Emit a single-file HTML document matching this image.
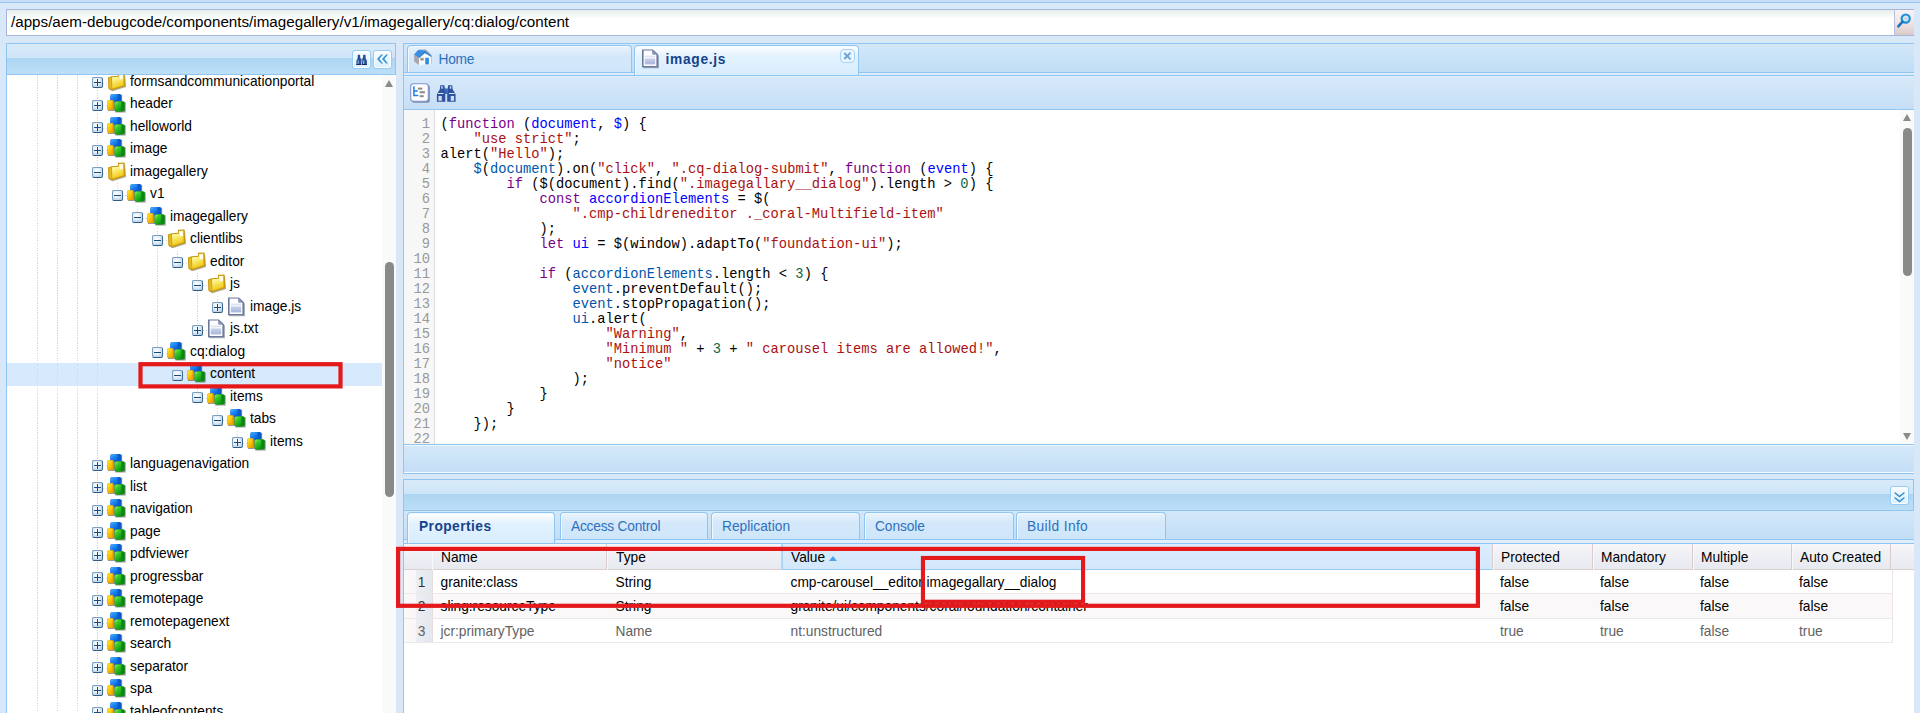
<!DOCTYPE html><html><head><meta charset="utf-8"><style>*{box-sizing:border-box;margin:0;padding:0}
html,body{width:1920px;height:713px;overflow:hidden}
body{background:#d9e8f8;font-family:"Liberation Sans",sans-serif;position:relative}
#topline,#addr,#srch,#lp,#rp,#pp{position:absolute}
#lph,#lph *,#tree,#tree *,#tsb,#tsb *,#rp *,#pp *{position:absolute}
.ic{position:absolute;overflow:visible}
#topline{left:0;top:0;width:1920px;height:3px;background:#c9def4;border-bottom:1px solid #93c6f0}
#addr{left:6px;top:9px;width:1888px;height:27px;border:1px solid #a9b5d6;border-right:0;background:linear-gradient(#e6efee,#fff 9px);font-size:15.2px;color:#000;padding:3px 0 0 4px;white-space:nowrap}
#srch{left:1894px;top:9px;width:20px;height:27px;border:1px solid #a9b5d6;border-left:1px solid #b8c0dc;border-right:0;background:linear-gradient(#f8f3f3,#f1e7e7 45%,#dccaca)}
#lp{left:6px;top:43px;width:390px;height:700px;background:#fff;border:1px solid #8ec5f2;border-right:0}
#lph{left:0;top:0;width:389px;border-right:1px solid #8ec5f2;height:31px;background:linear-gradient(#d9ebfa 0,#cee5f8 45%,#acd5f3 47%,#bcdff7 100%);border-bottom:1px solid #8ec5f2}
.tbtn{width:19px;height:19px;border:1px solid #95cdf4;border-radius:3px;background:linear-gradient(#fbfdff,#e9f5fe 50%,#dcf0fd);box-shadow:inset 0 0 0 1px #fff}
#tree{left:0;top:31px;width:375px;height:670px;overflow:hidden}
.sel{left:0;width:375px;height:22.7px;background:#d7e9fc}
.vl{width:1px;background:repeating-linear-gradient(#e6d0d5 0 1.25px,transparent 1.25px 2.5px)}
.hl{height:1px;background:repeating-linear-gradient(90deg,#e6d0d5 0 1.25px,transparent 1.25px 2.5px)}
.exp{width:11px;height:11px;border:1px solid #7b9dbd;border-right-color:#3d6a8f;border-bottom-color:#2f5b80;border-radius:2px;background:radial-gradient(circle at 40% 35%,#fff 0,#e6f0fa 40%,#a3c3e6 100%)}
.exp:before{content:"";position:absolute;left:1.4px;top:3.6px;width:6.4px;height:1.4px;background:#1d4a72}
.exp.plus:after{content:"";position:absolute;left:3.9px;top:1.2px;width:1.4px;height:6.4px;background:#1d4a72}
.tt{font-size:13.75px;line-height:22.5px;white-space:nowrap;color:#000;top:0}
#tsb{left:375px;top:31px;width:14px;height:670px;background:#fafafa}
.uparr{width:0;height:0;border-left:4.75px solid transparent;border-right:4.75px solid transparent;border-bottom:7px solid #8a8a8a}
.dnarr{width:0;height:0;border-left:4.75px solid transparent;border-right:4.75px solid transparent;border-top:7px solid #8a8a8a}
.thumb{width:9px;background:#8a8a8a;border-radius:4.5px}
#rp{left:403px;top:43px;width:1511px;height:431px;background:#fff;border:1px solid #8ec5f2;border-right:0}
#rtabs{left:0;top:0;width:1510px;height:32px;background:linear-gradient(#d3e8f9,#bedcf5);border-bottom:1px solid #8ec5f2}
#rtabs:before{content:"";position:absolute;left:0;top:28px;width:1510px;height:1px;background:#8ec5f2}#rtabs:after{content:"";position:absolute;left:0;top:29px;width:1510px;height:2px;background:#deecfb}
.tab{top:1px;height:27px;border:1px solid #8ec5f2;border-bottom:0;border-radius:4px 4px 0 0;background:linear-gradient(#e9f3fc,#d3e8fa 40%,#cfe6fa);box-shadow:inset 1px 1px 0 #f1f8fe;z-index:1}
.tab.act{background:linear-gradient(#ffffff,#e3f2fe 35%,#d8edfe);height:30px;z-index:2}#ptabs .tab.act{height:31px}
.tlbl{top:6px;font-size:13.75px;color:#2e70bd;white-space:nowrap;letter-spacing:-0.3px}
.tlbl.b{font-weight:bold;color:#15428b;letter-spacing:0.45px}
.tclose{left:205px;top:3px;width:15px;height:14px;border:1px solid #a9d3f5;border-radius:4px;background:#eaf5fe}
.tclose:before,.tclose:after{content:"";position:absolute;left:2.3px;top:5px;width:8.5px;height:2px;background:#6ba5dc;transform:rotate(45deg)}
.tclose:after{transform:rotate(-45deg)}
#rtb{left:0;top:32px;width:1510px;height:34px;background:linear-gradient(#d6e9f9,#c6dff6);border-bottom:1px solid #8ec5f2;box-shadow:inset 0 1px 0 #e3f0fc}
#code{left:0;top:66px;width:1510px;height:334px;background:#fff;overflow:hidden}
#gut{left:0;top:0;width:31px;height:334px;background:#f7f7f7;border-right:1px solid #ddd}
.ln{right:4px;font-family:"Liberation Mono",monospace;font-size:13.75px;line-height:15px;color:#999}
#src{left:36.5px;top:0;width:1450px;height:334px}
.cl{left:0;font-family:"Liberation Mono",monospace;font-size:13.75px;line-height:15px;white-space:pre;color:#000}
.cl i{position:static!important;font-style:normal}
.k{color:#708}.d{color:#00f}.v{color:#05a}.s{color:#a11}.n{color:#164}
#csb{left:1496px;top:0;width:14px;height:334px;background:#fafafa}
#rstat{left:0;top:400px;width:1510px;height:29px;background:linear-gradient(#d4e8f9,#c4def6);border-top:1px solid #8ec5f2;box-shadow:inset 0 1px 0 #eef7fe,inset 0 -1px 0 #f4faff}
#pp{left:403px;top:479px;width:1511px;height:240px;background:#fff;border:1px solid #8ec5f2;border-right:0}
#pph{left:0;top:0;width:1510px;height:31px;border-right:1px solid #8ec5f2;background:linear-gradient(#d9ebfa 0,#cee5f8 45%,#acd5f3 47%,#bcdff7 100%);border-bottom:1px solid #8ec5f2}
#ptabs{left:0;top:31px;width:1510px;height:33px;background:linear-gradient(#d3e8f9,#bedcf5);border-bottom:1px solid #8ec5f2}
#ptabs:before{content:"";position:absolute;left:0;top:28px;width:1510px;height:1px;background:#8ec5f2}#ptabs:after{content:"";position:absolute;left:0;top:29px;width:1510px;height:3px;background:#e0eefc}
#ghd{left:0;top:64px;width:1510px;height:26px;background:linear-gradient(#f7f6f8,#e6e9f0);border-bottom:1px solid #dccfcf}
.gh{top:0;height:26px;font-size:13.75px;line-height:27.5px;padding-left:8px;color:#000;border-right:1px solid #d8cccc;border-left:1px solid #f8f8fa;white-space:nowrap}
.gh.num{border-left:0}
.gh.sorted{background:linear-gradient(#dcedfd,#d3e8fc);border-bottom:1px solid #99ccf3;border-left:1px solid #a6d5f6;height:26px}
.sarr{position:static!important;display:inline-block;margin-left:4px;vertical-align:1.5px;width:0;height:0;border-left:4.5px solid transparent;border-right:4.5px solid transparent;border-bottom:5px solid #4da1e3}
.grow{left:0;width:1489px;height:24px;border-bottom:1px solid #ece8e8;border-right:1px solid #ece4e4;background:#fff}
.grow.alt{background:#faf8f9}
.gc{top:0;height:23px;font-size:13.75px;line-height:25px;padding-left:8.5px;white-space:nowrap;color:#000;overflow:hidden}
.gc.num{color:#333;padding:0 6.5px 0 0;text-align:right;background:linear-gradient(90deg,#fbf8f9 0,#f8f6f8 42%,#eceef3 45%,#e3e7ee 100%);border-right:1px solid #e6dcdc;height:100%}
.grow.prot .gc{color:#626262}
#ann{position:absolute;left:0;top:0;z-index:50}
</style></head><body><svg width="0" height="0" style="position:absolute"><defs>
<linearGradient id="gy" x1="0" y1="0" x2="0.3" y2="1"><stop offset="0" stop-color="#fffde0"/><stop offset=".45" stop-color="#fbef7a"/><stop offset="1" stop-color="#f2c812"/></linearGradient>
<linearGradient id="gb" x1="0" y1="0" x2="0.6" y2="1"><stop offset="0" stop-color="#4fb0ff"/><stop offset=".5" stop-color="#1d86f2"/><stop offset="1" stop-color="#0c5fd6"/></linearGradient>
<linearGradient id="gyc" x1="0" y1="0" x2="0.5" y2="1"><stop offset="0" stop-color="#ffe640"/><stop offset=".6" stop-color="#fbc800"/><stop offset="1" stop-color="#f0a800"/></linearGradient>
<linearGradient id="ggc" x1="0" y1="0" x2="0.6" y2="1"><stop offset="0" stop-color="#90f86a"/><stop offset=".4" stop-color="#3ccc28"/><stop offset="1" stop-color="#0d9a14"/></linearGradient>
<linearGradient id="gfb" x1="0" y1="0" x2="0" y2="1"><stop offset="0" stop-color="#c9d2ea"/><stop offset="1" stop-color="#a8b6dc"/></linearGradient>
<filter id="sh" x="-20%" y="-20%" width="150%" height="150%"><feGaussianBlur stdDeviation=".7"/></filter>
<g id="folder"><path d="M2 7 L5 5.5 L11.5 5 L11.5 2 L18 1.8 L19 15 L5.5 19.2 L2.3 17.5 Z" fill="#554010" opacity=".45" filter="url(#sh)"/><path d="M1 5.6 L4.5 4.2 L11 3.8 L11 0.8 L17.5 0.5 L18.3 14 L4.5 18.3 L1.3 16.5 Z" fill="#c99a0e"/><path d="M5 5.3 L11.8 4.7 L12 2 L16.3 1.8 L16.6 13.3 L5.3 16.8 Z" fill="url(#gy)"/><path d="M2.1 6.2 L4.3 5.3 L4.5 17 L2.4 15.9 Z" fill="#e9bb22"/><path d="M12.8 2.4 L15.8 2.3 L15.9 7 L12.9 7.2 Z" fill="#fffef4"/></g>
<g id="comp"><path d="M4.5 0.8 L15.2 0.8 L15.2 8 L18.7 8.2 L18.7 18.5 L8.5 18.5 L7.7 17 L1 17 L1 7.5 L4.2 7.2 Z" fill="#222" opacity=".45" filter="url(#sh)"/><path d="M5.3 -0.1 L12.4 -0.1 Q14.4 -0.1 14.4 1.9 L14.4 6.4 Q14.4 8.4 12.4 8.4 L5.3 8.4 Q3.3 8.4 3.3 6.4 L3.3 1.9 Q3.3 -0.1 5.3 -0.1 Z" fill="#0b5acc"/><path d="M5.3 0.1 L10.6 0.1 L10.6 8.2 L5.3 8.2 Q3.5 8.2 3.5 6.3999999999999995 L3.5 1.9000000000000001 Q3.5 0.1 5.3 0.1 Z" fill="url(#gb)"/><path d="M1.8 6.2 L5.5 6.2 Q7.3 6.2 7.3 8.0 L7.3 14.3 Q7.3 16.1 5.5 16.1 L1.8 16.1 Q0 16.1 0 14.3 L0 8.0 Q0 6.2 1.8 6.2 Z" fill="#e08c00"/><path d="M1.8 6.4 L5.6 6.4 L5.6 15.9 L1.8 15.9 Q0.2 15.9 0.2 14.3 L0.2 8.0 Q0.2 6.4 1.8 6.4 Z" fill="url(#gyc)"/><path d="M9.6 7.2 L15.8 7.2 Q17.8 7.2 17.8 9.2 L17.8 15.600000000000001 Q17.8 17.6 15.8 17.6 L9.6 17.6 Q7.6 17.6 7.6 15.600000000000001 L7.6 9.2 Q7.6 7.2 9.6 7.2 Z" fill="#0a8612"/><path d="M9.6 7.4 L14.4 7.4 L14.4 17.4 L9.6 17.4 Q7.8 17.4 7.8 15.599999999999998 L7.8 9.200000000000001 Q7.8 7.4 9.6 7.4 Z" fill="url(#ggc)"/></g>
<g id="file"><path d="M2 1.5 L13 1.5 L18 6.5 L18 19.3 L2 19.3 Z" fill="#303a58" opacity=".4" filter="url(#sh)"/><path d="M1 0.4 L11.8 0.4 L16.9 5.3 L16.9 18.3 L1 18.3 Z" fill="#6a789c"/><path d="M2.6 1.6 L11.3 1.6 L11.5 5.4 L15.4 5.6 L15.4 16.9 L2.6 16.9 Z" fill="#fdfdff"/><path d="M11.6 1.6 L15.4 5.3 L11.6 5.3 Z" fill="#8d9abb"/><rect x="3.8" y="6.6" width="10.4" height="1.8" fill="#dfe3f1"/><rect x="3.8" y="9.4" width="10.4" height="6" fill="url(#gfb)"/></g>
<g id="home"><path d="M3.5 8 L8 3.5 L15 3.5 L21 9.5 L21 18 L9 18.5 L3.5 15 Z" fill="#303030" opacity=".35" filter="url(#sh)"/><path d="M3.1 8.4 L7.1 4.1 L13.6 4.4 L8 12.1 Z" fill="#3b8fe2"/><path d="M3.1 8.4 L8 12.1 L8 18.9 L3.1 15.5 Z" fill="#a9a9ad"/><path d="M8 12.1 L13.9 6.9 L20.4 10 L20.4 18.3 L8 18.9 Z" fill="#fbfbfb"/><path d="M13.6 4.4 L20.4 10 L20.2 11 L13.9 6.9 L8 12.1 L7.9 11.4 Z" fill="#2d7dd6"/><rect x="14.2" y="11.8" width="3.7" height="6.5" fill="#2f8ce8"/><rect x="9.3" y="11.8" width="3.4" height="2.8" fill="#9a9a9a"/></g>
<g id="struct"><rect x="1.8" y="1.8" width="18" height="18" rx="2.5" fill="#3b4560" opacity=".55" filter="url(#sh)"/><rect x="0.7" y="0.7" width="17.6" height="17.6" rx="2.8" fill="#fff" stroke="#7e92d0" stroke-width="1.1"/><path d="M3.9 3.2 V12.5 H8.3 M3.9 8 H7.8" stroke="#1a80e6" stroke-width="1.5" fill="none"/><rect x="7.8" y="4.6" width="4.6" height="2" fill="#8c8c8c"/><rect x="9.7" y="8.2" width="5.2" height="2.1" fill="#8c8c8c"/><rect x="9.7" y="12.2" width="4" height="2" fill="#8c8c8c"/></g>
<g id="binoc"><path d="M4.3 1.3 H8.3 L9 5.5 L9.3 8 V17.7 H0.9 V10.5 L2.5 7.5 L3.8 5.5 Z M16.2 1.3 H12.2 L11.5 5.5 L11.2 8 V17.7 H19.6 V10.5 L18 7.5 L16.7 5.5 Z" fill="#2c52a0"/><rect x="8.8" y="4.5" width="3" height="5.5" fill="#3e66b6"/><path d="M2.4 12 H5.8 V16.8 H2.4 Z M14.7 12 H18.1 V16.8 H14.7 Z" fill="#d3ddf2"/><rect x="5.2" y="2.2" width="1.5" height="2.5" fill="#c8d4f0"/><rect x="13.8" y="2.2" width="1.5" height="2.5" fill="#c8d4f0"/><path d="M2.3 9 H7.5 V10 H1.8 Z M13 9 H18.2 L18.7 10 H13 Z" fill="#dfe7f7"/></g>
<g id="binsm"><path d="M0.4 11 L0.4 6.8 L1.6 4.5 L1.8 0.8 L4 0.8 L4.4 4.5 L5.3 4.5 L5.3 11 Z" fill="#2a4d94"/><path d="M6 11 L6 4.5 L6.9 4.5 L7.3 0.8 L9.5 0.8 L9.7 4.5 L10.9 6.8 L10.9 11 Z" fill="#2a4d94"/><rect x="4.8" y="5" width="1.7" height="2.5" fill="#6e8fcf"/><path d="M1.7 6.5 L2.7 6.5 L2.4 10.2 L1.7 10.2 Z" fill="#a9cdf5"/><path d="M7.2 6.5 L8.4 6.5 L8.1 10.2 L7.2 10.2 Z" fill="#a9cdf5"/><rect x="0.4" y="10" width="4.9" height="1" fill="#132a5c"/><rect x="6" y="10" width="4.9" height="1" fill="#132a5c"/></g>
<g id="dblleft"><path d="M5.2 0.5 L1 5 L5.2 9.5 L7 9.5 L3.4 5 L7 0.5 Z M10.2 0.5 L6 5 L10.2 9.5 L12 9.5 L8.4 5 L12 0.5 Z" fill="#3396d3"/></g>
<g id="dbldown"><path d="M0.6 0.8 L5.5 4.6 L10.4 0.8 L10.4 2.6 L5.5 6.6 L0.6 2.6 Z M0.6 5.8 L5.5 9.6 L10.4 5.8 L10.4 7.6 L5.5 11.6 L0.6 7.6 Z" fill="#3590cc"/></g>
<g id="mag"><circle cx="9.7" cy="5.6" r="4.1" stroke="#1f8fdc" stroke-width="2.2" fill="#dae6ee"/><circle cx="9.7" cy="5.6" r="1.6" fill="#c4d8e6"/><path d="M6.6 8.7 L2.3 13.4" stroke="#1a72c4" stroke-width="2.6" stroke-linecap="round"/></g>
</defs></svg>
<div id="topline"></div><div id="addr">/apps/aem-debugcode/components/imagegallery/v1/imagegallery/cq:dialog/content</div><div id="srch"><svg style="position:absolute;left:1px;top:3px;width:18px;height:18px" viewBox="0 0 18 18"><use href="#mag"/></svg></div><div id="lp"><div id="lph"><div class="tbtn" style="left:345px;top:6px"><svg style="position:absolute;left:3px;top:3px;width:12px;height:12px" viewBox="0 0 12 12"><use href="#binsm"/></svg></div><div class="tbtn" style="left:366px;top:6px"><svg style="position:absolute;left:2px;top:3px;width:14px;height:12px" viewBox="0 0 14 12"><use href="#dblleft"/></svg></div></div><div id="tree"><div class="sel" style="top:288.30px"></div><div class="vl" style="left:30px;top:0.00px;height:638.00px"></div><div class="vl" style="left:50px;top:0.00px;height:638.00px"></div><div class="vl" style="left:70px;top:0.00px;height:638.00px"></div><div class="vl" style="left:90px;top:0.00px;height:638.00px"></div><div class="vl" style="left:110px;top:108.30px;height:11.80px"></div><div class="vl" style="left:130px;top:130.80px;height:11.80px"></div><div class="vl" style="left:150px;top:153.30px;height:124.30px"></div><div class="vl" style="left:170px;top:175.80px;height:11.80px"></div><div class="vl" style="left:190px;top:198.30px;height:56.80px"></div><div class="vl" style="left:210px;top:220.80px;height:11.80px"></div><div class="vl" style="left:170px;top:288.30px;height:11.80px"></div><div class="vl" style="left:190px;top:310.80px;height:11.80px"></div><div class="vl" style="left:210px;top:333.30px;height:11.80px"></div><div class="vl" style="left:230px;top:355.80px;height:11.80px"></div><div class="hl" style="left:96px;top:7.60px;width:4px"></div><div class="exp plus" style="left:85px;top:2px"></div><svg class="ic" style="left:100px;top:-3.4px;width:20px;height:20px" viewBox="0 0 20 20"><use href="#folder"/></svg><div class="tt" style="left:123px;top:-4.20px">formsandcommunicationportal</div><div class="hl" style="left:96px;top:30.10px;width:4px"></div><div class="exp plus" style="left:85px;top:25px"></div><svg class="ic" style="left:100px;top:19.1px;width:20px;height:20px" viewBox="0 0 20 20"><use href="#comp"/></svg><div class="tt" style="left:123px;top:18.30px">header</div><div class="hl" style="left:96px;top:52.60px;width:4px"></div><div class="exp plus" style="left:85px;top:47px"></div><svg class="ic" style="left:100px;top:41.6px;width:20px;height:20px" viewBox="0 0 20 20"><use href="#comp"/></svg><div class="tt" style="left:123px;top:40.80px">helloworld</div><div class="hl" style="left:96px;top:75.10px;width:4px"></div><div class="exp plus" style="left:85px;top:70px"></div><svg class="ic" style="left:100px;top:64.1px;width:20px;height:20px" viewBox="0 0 20 20"><use href="#comp"/></svg><div class="tt" style="left:123px;top:63.30px">image</div><div class="hl" style="left:96px;top:97.60px;width:4px"></div><div class="exp minus" style="left:85px;top:92px"></div><svg class="ic" style="left:100px;top:86.6px;width:20px;height:20px" viewBox="0 0 20 20"><use href="#folder"/></svg><div class="tt" style="left:123px;top:85.80px">imagegallery</div><div class="hl" style="left:116px;top:120.10px;width:4px"></div><div class="exp minus" style="left:105px;top:115px"></div><svg class="ic" style="left:120px;top:109.1px;width:20px;height:20px" viewBox="0 0 20 20"><use href="#comp"/></svg><div class="tt" style="left:143px;top:108.30px">v1</div><div class="hl" style="left:136px;top:142.60px;width:4px"></div><div class="exp minus" style="left:125px;top:137px"></div><svg class="ic" style="left:140px;top:131.6px;width:20px;height:20px" viewBox="0 0 20 20"><use href="#comp"/></svg><div class="tt" style="left:163px;top:130.80px">imagegallery</div><div class="hl" style="left:156px;top:165.10px;width:4px"></div><div class="exp minus" style="left:145px;top:160px"></div><svg class="ic" style="left:160px;top:154.1px;width:20px;height:20px" viewBox="0 0 20 20"><use href="#folder"/></svg><div class="tt" style="left:183px;top:153.30px">clientlibs</div><div class="hl" style="left:176px;top:187.60px;width:4px"></div><div class="exp minus" style="left:165px;top:182px"></div><svg class="ic" style="left:180px;top:176.6px;width:20px;height:20px" viewBox="0 0 20 20"><use href="#folder"/></svg><div class="tt" style="left:203px;top:175.80px">editor</div><div class="hl" style="left:196px;top:210.10px;width:4px"></div><div class="exp minus" style="left:185px;top:205px"></div><svg class="ic" style="left:200px;top:199.1px;width:20px;height:20px" viewBox="0 0 20 20"><use href="#folder"/></svg><div class="tt" style="left:223px;top:198.30px">js</div><div class="hl" style="left:216px;top:232.60px;width:4px"></div><div class="exp plus" style="left:205px;top:227px"></div><svg class="ic" style="left:220px;top:221.6px;width:20px;height:20px" viewBox="0 0 20 20"><use href="#file"/></svg><div class="tt" style="left:243px;top:220.80px">image.js</div><div class="hl" style="left:196px;top:255.10px;width:4px"></div><div class="exp plus" style="left:185px;top:250px"></div><svg class="ic" style="left:200px;top:244.1px;width:20px;height:20px" viewBox="0 0 20 20"><use href="#file"/></svg><div class="tt" style="left:223px;top:243.30px">js.txt</div><div class="hl" style="left:156px;top:277.60px;width:4px"></div><div class="exp minus" style="left:145px;top:272px"></div><svg class="ic" style="left:160px;top:266.6px;width:20px;height:20px" viewBox="0 0 20 20"><use href="#comp"/></svg><div class="tt" style="left:183px;top:265.80px">cq:dialog</div><div class="hl" style="left:176px;top:300.10px;width:4px"></div><div class="exp minus" style="left:165px;top:295px"></div><svg class="ic" style="left:180px;top:289.1px;width:20px;height:20px" viewBox="0 0 20 20"><use href="#comp"/></svg><div class="tt" style="left:203px;top:288.30px">content</div><div class="hl" style="left:196px;top:322.60px;width:4px"></div><div class="exp minus" style="left:185px;top:317px"></div><svg class="ic" style="left:200px;top:311.6px;width:20px;height:20px" viewBox="0 0 20 20"><use href="#comp"/></svg><div class="tt" style="left:223px;top:310.80px">items</div><div class="hl" style="left:216px;top:345.10px;width:4px"></div><div class="exp minus" style="left:205px;top:340px"></div><svg class="ic" style="left:220px;top:334.1px;width:20px;height:20px" viewBox="0 0 20 20"><use href="#comp"/></svg><div class="tt" style="left:243px;top:333.30px">tabs</div><div class="hl" style="left:236px;top:367.60px;width:4px"></div><div class="exp plus" style="left:225px;top:362px"></div><svg class="ic" style="left:240px;top:356.6px;width:20px;height:20px" viewBox="0 0 20 20"><use href="#comp"/></svg><div class="tt" style="left:263px;top:355.80px">items</div><div class="hl" style="left:96px;top:390.10px;width:4px"></div><div class="exp plus" style="left:85px;top:385px"></div><svg class="ic" style="left:100px;top:379.1px;width:20px;height:20px" viewBox="0 0 20 20"><use href="#comp"/></svg><div class="tt" style="left:123px;top:378.30px">languagenavigation</div><div class="hl" style="left:96px;top:412.60px;width:4px"></div><div class="exp plus" style="left:85px;top:407px"></div><svg class="ic" style="left:100px;top:401.6px;width:20px;height:20px" viewBox="0 0 20 20"><use href="#comp"/></svg><div class="tt" style="left:123px;top:400.80px">list</div><div class="hl" style="left:96px;top:435.10px;width:4px"></div><div class="exp plus" style="left:85px;top:430px"></div><svg class="ic" style="left:100px;top:424.1px;width:20px;height:20px" viewBox="0 0 20 20"><use href="#comp"/></svg><div class="tt" style="left:123px;top:423.30px">navigation</div><div class="hl" style="left:96px;top:457.60px;width:4px"></div><div class="exp plus" style="left:85px;top:452px"></div><svg class="ic" style="left:100px;top:446.6px;width:20px;height:20px" viewBox="0 0 20 20"><use href="#comp"/></svg><div class="tt" style="left:123px;top:445.80px">page</div><div class="hl" style="left:96px;top:480.10px;width:4px"></div><div class="exp plus" style="left:85px;top:475px"></div><svg class="ic" style="left:100px;top:469.1px;width:20px;height:20px" viewBox="0 0 20 20"><use href="#comp"/></svg><div class="tt" style="left:123px;top:468.30px">pdfviewer</div><div class="hl" style="left:96px;top:502.60px;width:4px"></div><div class="exp plus" style="left:85px;top:497px"></div><svg class="ic" style="left:100px;top:491.6px;width:20px;height:20px" viewBox="0 0 20 20"><use href="#comp"/></svg><div class="tt" style="left:123px;top:490.80px">progressbar</div><div class="hl" style="left:96px;top:525.10px;width:4px"></div><div class="exp plus" style="left:85px;top:520px"></div><svg class="ic" style="left:100px;top:514.1px;width:20px;height:20px" viewBox="0 0 20 20"><use href="#comp"/></svg><div class="tt" style="left:123px;top:513.30px">remotepage</div><div class="hl" style="left:96px;top:547.60px;width:4px"></div><div class="exp plus" style="left:85px;top:542px"></div><svg class="ic" style="left:100px;top:536.6px;width:20px;height:20px" viewBox="0 0 20 20"><use href="#comp"/></svg><div class="tt" style="left:123px;top:535.80px">remotepagenext</div><div class="hl" style="left:96px;top:570.10px;width:4px"></div><div class="exp plus" style="left:85px;top:565px"></div><svg class="ic" style="left:100px;top:559.1px;width:20px;height:20px" viewBox="0 0 20 20"><use href="#comp"/></svg><div class="tt" style="left:123px;top:558.30px">search</div><div class="hl" style="left:96px;top:592.60px;width:4px"></div><div class="exp plus" style="left:85px;top:587px"></div><svg class="ic" style="left:100px;top:581.6px;width:20px;height:20px" viewBox="0 0 20 20"><use href="#comp"/></svg><div class="tt" style="left:123px;top:580.80px">separator</div><div class="hl" style="left:96px;top:615.10px;width:4px"></div><div class="exp plus" style="left:85px;top:610px"></div><svg class="ic" style="left:100px;top:604.1px;width:20px;height:20px" viewBox="0 0 20 20"><use href="#comp"/></svg><div class="tt" style="left:123px;top:603.30px">spa</div><div class="hl" style="left:96px;top:637.60px;width:4px"></div><div class="exp plus" style="left:85px;top:632px"></div><svg class="ic" style="left:100px;top:626.6px;width:20px;height:20px" viewBox="0 0 20 20"><use href="#comp"/></svg><div class="tt" style="left:123px;top:625.80px">tableofcontents</div></div><div id="tsb"><div class="uparr" style="left:3px;top:5px"></div><div class="thumb" style="left:3px;top:187px;height:235px"></div></div></div><div id="rp"><div id="rtabs"><div class="tab" style="left:3px;width:225px"><svg class="ic" style="left:3px;top:0px;width:22px;height:22px;width:22px" viewBox="0 0 22 22"><use href="#home"/></svg><span class="tlbl" style="left:30.5px">Home</span></div><div class="tab act" style="left:230px;width:225px"><svg class="ic" style="left:5.7px;top:2.5px;width:20px;height:20px" viewBox="0 0 20 20"><use href="#file"/></svg><span class="tlbl b" style="left:30.5px;letter-spacing:0.7px">image.js</span><div class="tclose"></div></div></div><div id="rtb"><svg class="ic" style="left:6px;top:7px;width:20px;height:20px" viewBox="0 0 20 20"><use href="#struct"/></svg><svg class="ic" style="left:32px;top:8px;width:20px;height:20px" viewBox="0 0 20 20"><use href="#binoc"/></svg></div><div id="code"><div id="gut"><div class="ln" style="top:7px">1</div><div class="ln" style="top:22px">2</div><div class="ln" style="top:37px">3</div><div class="ln" style="top:52px">4</div><div class="ln" style="top:67px">5</div><div class="ln" style="top:82px">6</div><div class="ln" style="top:97px">7</div><div class="ln" style="top:112px">8</div><div class="ln" style="top:127px">9</div><div class="ln" style="top:142px">10</div><div class="ln" style="top:157px">11</div><div class="ln" style="top:172px">12</div><div class="ln" style="top:187px">13</div><div class="ln" style="top:202px">14</div><div class="ln" style="top:217px">15</div><div class="ln" style="top:232px">16</div><div class="ln" style="top:247px">17</div><div class="ln" style="top:262px">18</div><div class="ln" style="top:277px">19</div><div class="ln" style="top:292px">20</div><div class="ln" style="top:307px">21</div><div class="ln" style="top:322px">22</div></div><div id="src"><div class="cl" style="top:7px">(<i class="k">function</i> (<i class="d">document</i>, <i class="d">$</i>) {</div><div class="cl" style="top:22px">    <i class="s">"use strict"</i>;</div><div class="cl" style="top:37px">alert(<i class="s">"Hello"</i>);</div><div class="cl" style="top:52px">    <i class="v">$</i>(<i class="v">document</i>).on(<i class="s">"click"</i>, <i class="s">".cq-dialog-submit"</i>, <i class="k">function</i> (<i class="d">event</i>) {</div><div class="cl" style="top:67px">        <i class="k">if</i> ($(document).find(<i class="s">".imagegallary__dialog"</i>).length &gt; <i class="n">0</i>) {</div><div class="cl" style="top:82px">            <i class="k">const</i> <i class="d">accordionElements</i> = $(</div><div class="cl" style="top:97px">                <i class="s">".cmp-childreneditor ._coral-Multifield-item"</i></div><div class="cl" style="top:112px">            );</div><div class="cl" style="top:127px">            <i class="k">let</i> <i class="d">ui</i> = $(window).adaptTo(<i class="s">"foundation-ui"</i>);</div><div class="cl" style="top:142px"></div><div class="cl" style="top:157px">            <i class="k">if</i> (<i class="v">accordionElements</i>.length &lt; <i class="n">3</i>) {</div><div class="cl" style="top:172px">                <i class="v">event</i>.preventDefault();</div><div class="cl" style="top:187px">                <i class="v">event</i>.stopPropagation();</div><div class="cl" style="top:202px">                <i class="v">ui</i>.alert(</div><div class="cl" style="top:217px">                    <i class="s">"Warning"</i>,</div><div class="cl" style="top:232px">                    <i class="s">"Minimum "</i> + <i class="n">3</i> + <i class="s">" carousel items are allowed!"</i>,</div><div class="cl" style="top:247px">                    <i class="s">"notice"</i></div><div class="cl" style="top:262px">                );</div><div class="cl" style="top:277px">            }</div><div class="cl" style="top:292px">        }</div><div class="cl" style="top:307px">    });</div></div><div id="csb"><div class="uparr" style="left:3px;top:4px"></div><div class="thumb" style="left:3px;top:18px;height:148px"></div><div class="dnarr" style="left:3px;top:323px"></div></div></div><div id="rstat"></div></div><div id="pp"><div id="pph"><div class="tbtn" style="left:1486px;top:6px"><svg style="position:absolute;left:2.6px;top:3.5px;width:11px;height:12px" viewBox="0 0 11 12"><use href="#dbldown"/></svg></div></div><div id="ptabs"><div class="tab act" style="left:3px;width:148px"><span class="tlbl b" style="left:11px;letter-spacing:0.45px">Properties</span></div><div class="tab" style="left:156px;width:148px"><span class="tlbl" style="left:10px;letter-spacing:-0.23px">Access Control</span></div><div class="tab" style="left:307px;width:149px"><span class="tlbl" style="left:10px;letter-spacing:0.0px">Replication</span></div><div class="tab" style="left:460px;width:150px"><span class="tlbl" style="left:10px;letter-spacing:-0.08px">Console</span></div><div class="tab" style="left:612px;width:150px"><span class="tlbl" style="left:10px;letter-spacing:0.38px">Build Info</span></div></div><div id="ghd"><div class="gh num" style="left:0px;width:29px"></div><div class="gh" style="left:28px;width:175px">Name</div><div class="gh" style="left:203px;width:175px">Type</div><div class="gh sorted" style="left:378px;width:711px">Value<span class="sarr"></span></div><div class="gh" style="left:1089px;width:100px;padding-left:7px">Protected</div><div class="gh" style="left:1189px;width:100px;padding-left:7px">Mandatory</div><div class="gh" style="left:1289px;width:99px;padding-left:7px">Multiple</div><div class="gh" style="left:1388px;width:99px;padding-left:7px">Auto Created</div></div><div class="grow" style="top:90px;height:24px"><div class="gc num" style="left:0px;width:29px">1</div><div class="gc" style="left:28px;width:175px">granite:class</div><div class="gc" style="left:203px;width:175px">String</div><div class="gc" style="left:378px;width:711px">cmp-carousel__editor imagegallary__dialog</div><div class="gc" style="left:1089px;width:100px;padding-left:7px">false</div><div class="gc" style="left:1189px;width:100px;padding-left:7px">false</div><div class="gc" style="left:1289px;width:99px;padding-left:7px">false</div><div class="gc" style="left:1388px;width:99px;padding-left:7px">false</div></div><div class="grow alt" style="top:114px;height:25px"><div class="gc num" style="left:0px;width:29px">2</div><div class="gc" style="left:28px;width:175px">sling:resourceType</div><div class="gc" style="left:203px;width:175px">String</div><div class="gc" style="left:378px;width:711px">granite/ui/components/coral/foundation/container</div><div class="gc" style="left:1089px;width:100px;padding-left:7px">false</div><div class="gc" style="left:1189px;width:100px;padding-left:7px">false</div><div class="gc" style="left:1289px;width:99px;padding-left:7px">false</div><div class="gc" style="left:1388px;width:99px;padding-left:7px">false</div></div><div class="grow prot" style="top:139px;height:24px"><div class="gc num" style="left:0px;width:29px">3</div><div class="gc" style="left:28px;width:175px">jcr:primaryType</div><div class="gc" style="left:203px;width:175px">Name</div><div class="gc" style="left:378px;width:711px">nt:unstructured</div><div class="gc" style="left:1089px;width:100px;padding-left:7px">true</div><div class="gc" style="left:1189px;width:100px;padding-left:7px">true</div><div class="gc" style="left:1289px;width:99px;padding-left:7px">false</div><div class="gc" style="left:1388px;width:99px;padding-left:7px">true</div></div></div><svg id="ann" width="1920" height="713" viewBox="0 0 1920 713"><rect x="140.50" y="364.20" width="200.00" height="22.20" fill="none" stroke="#e3191c" stroke-width="4.2"/><rect x="398.10" y="548.90" width="1079.80" height="56.90" fill="none" stroke="#e3191c" stroke-width="4.2"/><rect x="922.95" y="557.95" width="160.10" height="43.80" fill="none" stroke="#e3191c" stroke-width="4.1"/></svg></body></html>
